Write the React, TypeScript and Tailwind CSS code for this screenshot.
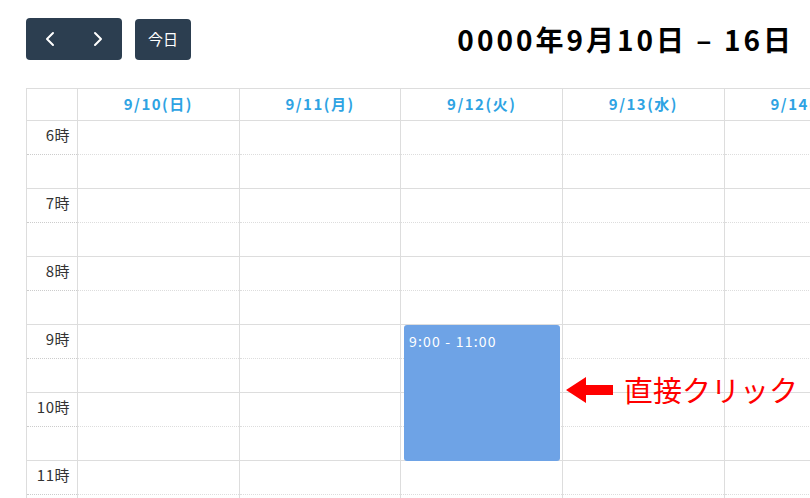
const days = ['9/10(日)', '9/11(月)', '9/12(火)', '9/13(水)', '9/14(木)', '9/15(金)', '9/16(土)'];
const hours = [6, 7, 8, 9, 10, 11, 12];

function Chevron({dir}: {dir: 'left' | 'right'}) {
  return (
    <svg width="10" height="16" viewBox="0 0 10 16" fill="none">
      <path
        d={dir === 'left' ? 'M8 2 L2 8 L8 14' : 'M2 2 L8 8 L2 14'}
        stroke="white"
        strokeWidth="2"
        strokeLinecap="round"
        strokeLinejoin="round"
      />
    </svg>
  );
}

export default function App() {
  return (
    <div
      className="w-[810px] h-[498px] overflow-hidden bg-white text-[#333]"
      style={{fontFamily: '"Noto Sans CJK JP", "Noto Sans", sans-serif'}}
    >
      <div className="pl-[26px] pr-[16px] pt-[18px] flex items-start justify-between">
        <div className="flex items-start gap-[13px]">
          <div className="flex h-[42px] w-[96px] rounded-[4px] bg-[#2c3e50]">
            <button className="flex-1 flex items-center justify-center">
              <Chevron dir="left" />
            </button>
            <button className="flex-1 flex items-center justify-center">
              <Chevron dir="right" />
            </button>
          </div>
          <button className="mt-[1px] h-[41px] w-[56px] rounded-[4px] bg-[#2c3e50] text-white text-[15px]">
            今日
          </button>
        </div>
        <h1 className="mt-[7px] text-[28px] font-bold text-black tracking-[3px] leading-none">
          0000年9月10日 – 16日
        </h1>
      </div>

      <div className="relative mt-[28px] ml-[26px] w-[1183px]">
        <div className="grid grid-cols-[51px_repeat(7,161.7px)] border-t border-l border-[#ddd]">
          <div className="h-[32px] border-r border-b border-[#ddd]" />
          {days.map((d) => (
            <div
              key={d}
              className="h-[32px] border-r border-b border-[#ddd] flex items-center justify-center text-[15px] font-bold text-[#2ea3e3] tracking-[1.5px]"
            >
              {d}
            </div>
          ))}
          {hours.map((h) => (
            <div key={h} className="contents">
              <div className="h-[68px] border-r border-b border-[#ddd] flex flex-col">
                <div className="h-[34px] border-b border-dotted border-[#ccc] text-right pr-[7px] pt-[5px] text-[15px] leading-[18px] tracking-[0.5px]">
                  {h}時
                </div>
              </div>
              {days.map((d) => (
                <div key={d} className="h-[68px] border-r border-b border-[#ddd]">
                  <div className="h-[34px] border-b border-dotted border-[#ddd]" />
                </div>
              ))}
            </div>
          ))}
        </div>

        {/* event */}
        <div className="absolute left-[378px] top-[237px] w-[156px] h-[136px] rounded-[3px] bg-[#6ea3e6] text-white text-[14px] px-[5px] pt-[6px] tracking-[1.2px]">
          9:00 - 11:00
        </div>

        {/* annotation */}
        <div className="absolute left-[540px] top-[287px] flex items-center gap-[10px]">
          <svg width="48" height="28" viewBox="0 0 48 28">
            <polygon points="0,14 20,1 20,9 47,9 47,19 20,19 20,27" fill="#ff0000" />
          </svg>
          <span className="text-[29px] text-[#ff0000] leading-none">直接クリック</span>
        </div>
      </div>
    </div>
  );
}
